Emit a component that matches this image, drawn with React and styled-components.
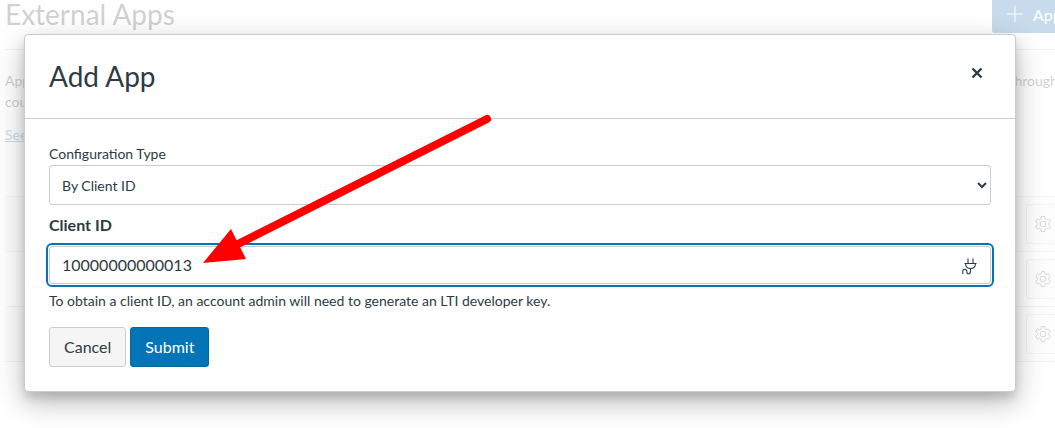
import React from "react";
import styled, { createGlobalStyle } from "styled-components";

const GlobalStyle = createGlobalStyle`
  *, *::before, *::after { box-sizing: border-box; }
  html, body { margin: 0; background: #fff; overflow: hidden; }
  body, button, input, select {
    font-family: Lato, "Open Sans", sans-serif;
    color: #2d3b45;
  }
  h1, h2, p { margin: 0; font-weight: 400; }
`;

const Page = styled.div`
  position: relative;
  min-height: 100vh;
  overflow: hidden;
`;

const Backdrop = styled.main`
  width: calc(100% + 64px);
  padding-left: 5px;
`;

const PageHeader = styled.header`
  display: flex;
  justify-content: space-between;
  height: 50px;
  border-bottom: 1px solid #c7cdd1;
`;

const PageTitle = styled.h1`
  font-size: 28px;
  line-height: 28px;
`;

const AddButton = styled.button`
  display: flex;
  align-items: center;
  gap: 10px;
  width: 127px;
  height: 33px;
  padding: 0 0 5px 15px;
  border: 0;
  border-radius: 0 0 3px 3px;
  background: #1466ac;
  color: #fff;
  font-size: 16px;
`;

const Intro = styled.div`
  padding: 20px 48px 51px 0;
  font-size: 14px;
  line-height: 21px;
`;

const IntroLink = styled.a`
  display: inline-block;
  margin-top: 12px;
  color: #1466ac;
  text-decoration: underline;
`;

const AppTable = styled.table`
  width: 100%;
  border-collapse: collapse;
`;

const AppRow = styled.tr`
  height: 55px;
  border-top: 1px solid #c7cdd1;
  border-bottom: 1px solid #c7cdd1;
  background: ${({ $striped }) => ($striped ? "#f5f5f5" : "#fff")};
`;

const ActionCell = styled.td`
  width: 93px;
  padding: 0;
`;

const GearButton = styled.button`
  display: flex;
  align-items: center;
  width: 56px;
  height: 40px;
  padding: 0 0 0 8px;
  border: 1px solid #c7cdd1;
  border-radius: 3px;
  background: #f5f5f5;
`;

const Overlay = styled.div`
  position: absolute;
  inset: 0;
  padding: 34px 39px 36px 24px;
  background: rgba(255, 255, 255, 0.77);
`;

const Dialog = styled.section`
  border: 1px solid #c7cdd1;
  border-radius: 4px;
  background: #fff;
  box-shadow: 0 6px 8px rgba(0, 0, 0, 0.12), 0 10px 28px rgba(0, 0, 0, 0.28);
`;

const DialogHeader = styled.header`
  display: flex;
  align-items: center;
  justify-content: space-between;
  height: 84px;
  padding: 0 24px;
  border-bottom: 1px solid #c7cdd1;
`;

const DialogTitle = styled.h2`
  padding-bottom: 2px;
  font-size: 28px;
  line-height: 34px;
`;

const CloseButton = styled.button`
  display: flex;
  align-items: center;
  justify-content: center;
  width: 28px;
  height: 28px;
  margin-bottom: 8px;
  padding: 0;
  border: 0;
  background: transparent;
`;

const Form = styled.form`
  display: flex;
  flex-direction: column;
  padding: 24px;
`;

const Label = styled.label`
  font-size: ${({ $strong }) => ($strong ? 16 : 14)}px;
  font-weight: ${({ $strong }) => ($strong ? 700 : 400)};
  line-height: 22px;
`;

const SelectWrap = styled.div`
  position: relative;
  margin-bottom: 9px;
`;

const Select = styled.select`
  display: block;
  width: 100%;
  height: 40px;
  padding: 0 12px;
  border: 1px solid #c7cdd1;
  border-radius: 3px;
  background: #fff;
  font-size: 14px;
  appearance: none;
`;

const SelectArrow = styled.svg`
  position: absolute;
  top: 16px;
  right: 4px;
  pointer-events: none;
`;

const InputBox = styled.div`
  display: flex;
  align-items: center;
  height: 38px;
  margin-top: 10px;
  padding: 0 12px;
  border: 1px solid #c7cdd1;
  border-radius: 3px;
  outline: 2px solid #0374b5;
  outline-offset: 1px;
`;

const TextInput = styled.input`
  flex: 1;
  min-width: 0;
  padding: 0 0 2px;
  border: 0;
  outline: 0;
  background: transparent;
  font-size: 16px;
`;

const Hint = styled.p`
  margin-top: 7px;
  font-size: 14px;
  line-height: 20px;
`;

const Actions = styled.div`
  display: flex;
  gap: 4px;
  margin-top: 16px;
`;

const Button = styled.button`
  height: 40px;
  padding: 0 14px 2px;
  border: 1px solid ${({ $primary }) => ($primary ? "#0367a1" : "#c7cdd1")};
  border-radius: 3px;
  background: ${({ $primary }) => ($primary ? "#0374b5" : "#f5f5f5")};
  color: ${({ $primary }) => ($primary ? "#fff" : "#2d3b45")};
  font-size: 16px;
`;

const Arrow = styled.svg`
  position: absolute;
  top: 0;
  left: 0;
  pointer-events: none;
`;

const GearIcon = () => (
  <svg width="16" height="16" viewBox="0 0 16 16" fill="none" stroke="#4a565f" strokeLinejoin="round" aria-hidden="true">
    <path d="M6.300.6h3.400l.4 2.300 1.300.8 2.200-.8 1.700 2.900-1.800 1.500v1.400l1.800 1.500-1.700 2.900-2.200-.8-1.300.8-.4 2.300H6.300l-.4-2.300-1.300-.8-2.200.8-1.700-2.900 1.800-1.500V7.300L.7 5.800l1.700-2.900 2.200.8 1.300-.8z" />
    <circle cx="8" cy="8" r="2.900" />
  </svg>
);

export default function App() {
  return (
    <Page>
      <GlobalStyle />
      <Backdrop>
        <PageHeader>
          <PageTitle>External Apps</PageTitle>
          <AddButton type="button">
            <svg width="16" height="16" viewBox="0 0 16 16" stroke="#fff" aria-hidden="true">
              <path d="M8 0v16M0 8h16" />
            </svg>
            App
          </AddButton>
        </PageHeader>
        <Intro>
          <p>
            Apps are an easy way to add new features to Canvas. They can be added to individual
            courses, or to all courses in an account. Once configured, you can link to them through
            course modules and create assignments for assessment tools.
          </p>
          <IntroLink href="#apps">See some LTI tools that work great with Canvas.</IntroLink>
        </Intro>
        <AppTable>
          <tbody>
            {[0, 1, 2].map((row) => (
              <AppRow key={row} $striped={row % 2 === 0}>
                <td />
                <ActionCell>
                  <GearButton type="button" aria-label="App settings">
                    <GearIcon />
                  </GearButton>
                </ActionCell>
              </AppRow>
            ))}
          </tbody>
        </AppTable>
      </Backdrop>
      <Overlay>
        <Dialog role="dialog" aria-modal="true" aria-labelledby="dialog-title">
          <DialogHeader>
            <DialogTitle id="dialog-title">Add App</DialogTitle>
            <CloseButton type="button" aria-label="Close">
              <svg width="12" height="12" viewBox="0 0 12 12" stroke="#2d3b45" strokeWidth="2.400" aria-hidden="true">
                <path d="M1.500 1.500l9 9M10.500 1.500l-9 9" />
              </svg>
            </CloseButton>
          </DialogHeader>
          <Form onSubmit={(event) => event.preventDefault()}>
            <Label htmlFor="config-type">Configuration Type</Label>
            <SelectWrap>
              <Select id="config-type" defaultValue="client">
                <option value="client">By Client ID</option>
              </Select>
              <SelectArrow width="10" height="8" viewBox="0 0 10 8" fill="none" stroke="#2d3b45" strokeWidth="2" aria-hidden="true">
                <path d="M1 2l4 4 4-4" />
              </SelectArrow>
            </SelectWrap>
            <Label $strong htmlFor="client-id">Client ID</Label>
            <InputBox>
              <TextInput id="client-id" type="text" defaultValue="10000000000013" />
              <svg width="16" height="20" viewBox="0 0 16 20" fill="none" stroke="#2d3b45" strokeWidth="1.100" aria-hidden="true">
                <path d="M6 3.500v5M11 3.500v5M2.500 8.500h12M3.500 8.500c0 3.500 2 5 5 5s5-1.500 5-5M8.500 13.500v2.500c0 1.800-.8 2.800-2 2.800S4.800 18 4.800 16.500s-.8-2.200-2-2.200S.8 15.300.8 16.500V19" />
              </svg>
            </InputBox>
            <Hint>To obtain a client ID, an account admin will need to generate an LTI developer key.</Hint>
            <Actions>
              <Button type="button">Cancel</Button>
              <Button type="submit" $primary>Submit</Button>
            </Actions>
          </Form>
        </Dialog>
      </Overlay>
      <Arrow width="500" height="280" viewBox="0 0 500 280" aria-hidden="true">
        <path d="M487 119L236 245" stroke="#f00" strokeWidth="8" strokeLinecap="round" />
        <path d="M203 263L231 229L246 259Z" fill="#f00" />
      </Arrow>
    </Page>
  );
}
